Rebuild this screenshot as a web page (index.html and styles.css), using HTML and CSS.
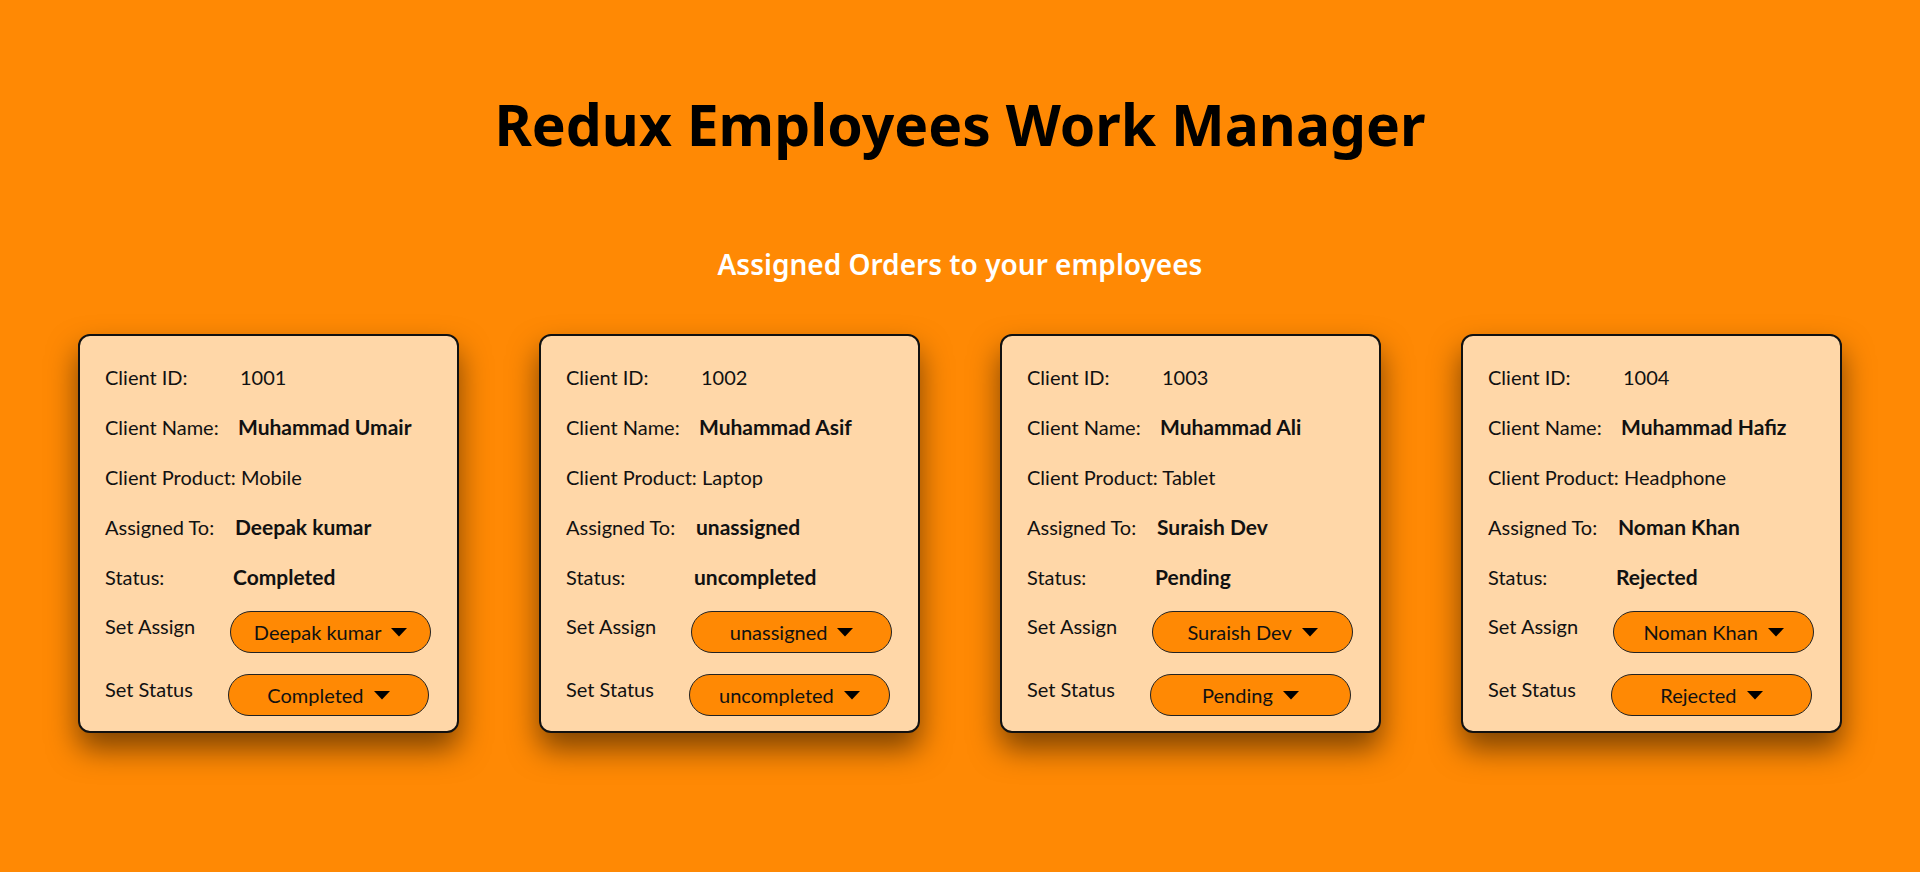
FILE: index.html
```html
<!DOCTYPE html>
<html lang="en">
<head>
<meta charset="utf-8">
<title>Redux Employees Work Manager</title>
<link rel="stylesheet" href="styles.css">
</head>
<body>
<main class="app">
  <h1 class="title">Redux Employees Work Manager</h1>
  <h2 class="subtitle">Assigned Orders to your employees</h2>
  <section class="cards">

    <article class="card">
      <div class="row"><span class="lbl">Client ID:</span><span class="val v-id">1001</span></div>
      <div class="row"><span class="lbl">Client Name:</span><span class="val v-name strong">Muhammad Umair</span></div>
      <div class="row"><span>Client Product: Mobile</span></div>
      <div class="row"><span class="lbl">Assigned To:</span><span class="val v-assign strong">Deepak kumar</span></div>
      <div class="row"><span class="lbl">Status:</span><span class="val strong">Completed</span></div>
      <div class="ctrl first"><span class="ctrl-lbl">Set Assign</span><button class="pill">Deepak kumar<svg class="caret" width="16" height="9" viewBox="0 0 16 9"><polygon points="0,0 16,0 8,8.5"/></svg></button></div>
      <div class="ctrl"><span class="ctrl-lbl">Set Status</span><button class="pill">Completed<svg class="caret" width="16" height="9" viewBox="0 0 16 9"><polygon points="0,0 16,0 8,8.5"/></svg></button></div>
    </article>

    <article class="card">
      <div class="row"><span class="lbl">Client ID:</span><span class="val v-id">1002</span></div>
      <div class="row"><span class="lbl">Client Name:</span><span class="val v-name strong">Muhammad Asif</span></div>
      <div class="row"><span>Client Product: Laptop</span></div>
      <div class="row"><span class="lbl">Assigned To:</span><span class="val v-assign strong">unassigned</span></div>
      <div class="row"><span class="lbl">Status:</span><span class="val strong">uncompleted</span></div>
      <div class="ctrl first"><span class="ctrl-lbl">Set Assign</span><button class="pill">unassigned<svg class="caret" width="16" height="9" viewBox="0 0 16 9"><polygon points="0,0 16,0 8,8.5"/></svg></button></div>
      <div class="ctrl"><span class="ctrl-lbl">Set Status</span><button class="pill">uncompleted<svg class="caret" width="16" height="9" viewBox="0 0 16 9"><polygon points="0,0 16,0 8,8.5"/></svg></button></div>
    </article>

    <article class="card">
      <div class="row"><span class="lbl">Client ID:</span><span class="val v-id">1003</span></div>
      <div class="row"><span class="lbl">Client Name:</span><span class="val v-name strong">Muhammad Ali</span></div>
      <div class="row"><span>Client Product: Tablet</span></div>
      <div class="row"><span class="lbl">Assigned To:</span><span class="val v-assign strong">Suraish Dev</span></div>
      <div class="row"><span class="lbl">Status:</span><span class="val strong">Pending</span></div>
      <div class="ctrl first"><span class="ctrl-lbl">Set Assign</span><button class="pill">Suraish Dev<svg class="caret" width="16" height="9" viewBox="0 0 16 9"><polygon points="0,0 16,0 8,8.5"/></svg></button></div>
      <div class="ctrl"><span class="ctrl-lbl">Set Status</span><button class="pill">Pending<svg class="caret" width="16" height="9" viewBox="0 0 16 9"><polygon points="0,0 16,0 8,8.5"/></svg></button></div>
    </article>

    <article class="card">
      <div class="row"><span class="lbl">Client ID:</span><span class="val v-id">1004</span></div>
      <div class="row"><span class="lbl">Client Name:</span><span class="val v-name strong">Muhammad Hafiz</span></div>
      <div class="row"><span>Client Product: Headphone</span></div>
      <div class="row"><span class="lbl">Assigned To:</span><span class="val v-assign strong">Noman Khan</span></div>
      <div class="row"><span class="lbl">Status:</span><span class="val strong">Rejected</span></div>
      <div class="ctrl first"><span class="ctrl-lbl">Set Assign</span><button class="pill">Noman Khan<svg class="caret" width="16" height="9" viewBox="0 0 16 9"><polygon points="0,0 16,0 8,8.5"/></svg></button></div>
      <div class="ctrl"><span class="ctrl-lbl">Set Status</span><button class="pill">Rejected<svg class="caret" width="16" height="9" viewBox="0 0 16 9"><polygon points="0,0 16,0 8,8.5"/></svg></button></div>
    </article>

  </section>
</main>
</body>
</html>
```
FILE: styles.css
```css
html, body {
  margin: 0;
  padding: 0;
  background: #ff8904;
}
body {
  min-height: 872px;
  font-family: Lato, "Noto Sans", sans-serif;
  color: #111;
}
.app {
  display: flex;
  flex-direction: column;
  align-items: center;
  padding-top: 90px;
}
.title {
  margin: 0;
  font-family: "Noto Sans", sans-serif;
  font-weight: 700;
  font-size: 57px;
  line-height: 68px;
  color: #000;
}
.subtitle {
  margin: 88px 0 0;
  font-family: "Noto Sans", sans-serif;
  font-weight: 600;
  font-size: 28px;
  line-height: 36px;
  color: #fff;
}
.cards {
  display: flex;
  justify-content: center;
  gap: 80px;
  margin-top: 52px;
}
.card {
  box-sizing: border-box;
  width: 381px;
  height: 399px;
  padding: 16px 20px 15px 25px;
  background: #ffd7a8;
  border: 2px solid #111;
  border-radius: 12px;
  box-shadow: 0 16px 30px rgba(0, 0, 0, 0.5);
  font-size: 20px;
}
.row {
  display: flex;
  height: 50px;
  line-height: 50px;
  white-space: nowrap;
}
.lbl {
  width: 128px;
  flex: none;
}
.val.v-id { padding-left: 7px; }
.val.v-name { padding-left: 5px; }
.val.v-assign { padding-left: 2px; }
.strong {
  font-weight: 700;
  font-size: 21px;
}
.ctrl {
  display: flex;
  align-items: flex-start;
  gap: 35px;
  margin-top: 21px;
}
.ctrl.first { margin-top: 9px; }
.ctrl-lbl {
  line-height: 30px;
  white-space: nowrap;
}
.pill {
  box-sizing: border-box;
  width: 201px;
  height: 42px;
  padding: 0;
  display: flex;
  align-items: center;
  justify-content: center;
  gap: 10px;
  background: #ff8904;
  border: 1px solid #222;
  border-radius: 21px;
  font-family: Lato, "Noto Sans", sans-serif;
  font-size: 20px;
  color: #111;
  cursor: pointer;
}
.caret {
  display: block;
  fill: #000;
}
```
